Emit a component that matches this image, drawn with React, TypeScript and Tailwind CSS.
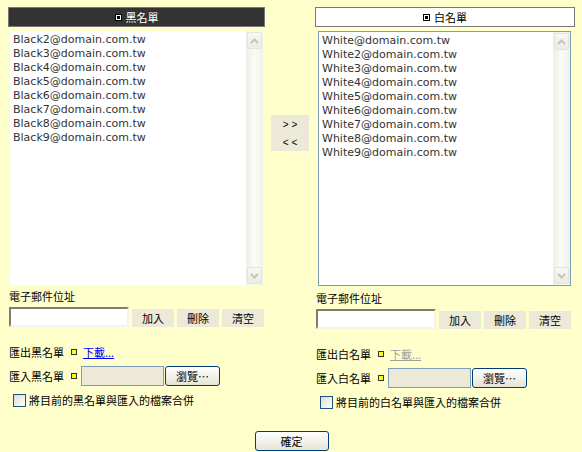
import React from "react";

const cjk = { fontFamily: '"Noto Sans CJK TC", "Noto Sans CJK SC", sans-serif' };

function Chevron({ up }: { up: boolean }) {
  return (
    <svg width="9" height="6" viewBox="0 0 9 6">
      <polyline
        points={up ? "1,5 4.5,1.5 8,5" : "1,1 4.5,4.5 8,1"}
        fill="none"
        stroke="#c5c4bb"
        strokeWidth="2"
      />
    </svg>
  );
}

function ScrollBtn({ up }: { up: boolean }) {
  return (
    <div className="flex h-[17px] w-[15px] items-center justify-center rounded-[2px] border border-[#e6e4da] bg-gradient-to-b from-[#f8f8f4] to-[#ecebe4]">
      <Chevron up={up} />
    </div>
  );
}

function Scrollbar() {
  return (
    <div className="flex h-full w-[17px] shrink-0 flex-col items-center bg-gradient-to-r from-[#eeeee8] via-[#fbfbf8] to-[#f1f1ec] py-[1px]">
      <ScrollBtn up />
      <div className="flex-1" />
      <ScrollBtn up={false} />
    </div>
  );
}

function HeaderIcon() {
  return (
    <span className="flex h-[7px] w-[7px] items-center justify-center border border-black bg-white">
      <span className="h-[3px] w-[3px] bg-black" />
    </span>
  );
}

function YellowSq({ mr }: { mr: string }) {
  return <span className={`ml-[7px] inline-block h-[6px] w-[6px] shrink-0 border border-[#333] bg-[#ffff00] ${mr}`} />;
}

function GrayBtn({ label }: { label: string }) {
  return (
    <div className="flex h-[18px] w-[42px] items-center justify-center bg-[#ece9d8] text-[11px] leading-[14px] text-black" style={cjk}>
      {label}
    </div>
  );
}

function ListItems({ items }: { items: string[] }) {
  return (
    <div className="flex-1 pl-[3px] pt-[2px] text-[11px] leading-[14px] text-[#333]" style={{ fontFamily: '"DejaVu Sans", Verdana, sans-serif' }}>
      {items.map((t) => (
        <div key={t}>{t}</div>
      ))}
    </div>
  );
}

function Lower({
  exportLabel,
  importLabel,
  mergeLabel,
  linkColor,
  labelMt,
}: {
  exportLabel: string;
  importLabel: string;
  mergeLabel: string;
  linkColor: string;
  labelMt: string;
}) {
  return (
    <div className="pl-[1px] text-[11px] leading-[14px] text-black" style={cjk}>
      <div className={labelMt}>電子郵件位址</div>
      <div className="mt-[4px] flex items-end gap-[3px]">
        <div className="h-[20px] w-[120px] border-2 border-t-[#7d7d74] border-l-[#7d7d74] border-r-[#f4f4ea] border-b-[#f4f4ea] bg-white" />
        <GrayBtn label="加入" />
        <GrayBtn label="刪除" />
        <GrayBtn label="清空" />
      </div>
      <div className="mt-[15px] flex h-[20px] items-center">
        <span className="w-[55px]">{exportLabel}</span>
        <YellowSq mr="mr-[6px]" />
        <span className={`underline ${linkColor}`}>下載...</span>
      </div>
      <div className="mt-[4px] flex h-[20px] items-center">
        <span className="w-[55px]">{importLabel}</span>
        <YellowSq mr="mr-[4px]" />
        <div className="h-[20px] w-[83px] border border-[#7f9db9] bg-[#ece9d8]" />
        <div className="ml-[1px] flex h-[20px] w-[55px] items-center justify-center rounded-[3px] border border-[#003c74] bg-gradient-to-b from-white to-[#e6e3d6]">
          瀏覽⋯
        </div>
      </div>
      <div className="mt-[7px] flex h-[14px] items-center pl-[4px]">
        <span className="h-[13px] w-[13px] shrink-0 border border-[#1c5180] bg-gradient-to-br from-[#dcdcd6] to-white" />
        <span className="ml-[3px]">{mergeLabel}</span>
      </div>
    </div>
  );
}

export default function App() {
  const black = [2, 3, 4, 5, 6, 7, 8, 9].map((n) => `Black${n}@domain.com.tw`);
  const white = ["White@domain.com.tw", ...[2, 3, 4, 5, 6, 7, 8, 9].map((n) => `White${n}@domain.com.tw`)];
  return (
    <div className="h-[452px] w-[582px] overflow-hidden bg-[#ffffcc] pt-[7px]">
      <div className="flex h-[424px] pl-[8px]">
        {/* left */}
        <div className="w-[257px] shrink-0">
          <div className="flex h-[20px] items-center justify-center gap-[4px] border border-[#777] bg-[#333] text-[11px] text-white" style={cjk}>
            <HeaderIcon />
            <span>黑名單</span>
          </div>
          <div className="ml-[2px] mt-[4px] flex h-[254px] w-[253px] bg-white">
            <ListItems items={black} />
            <Scrollbar />
          </div>
          <Lower
            exportLabel="匯出黑名單"
            importLabel="匯入黑名單"
            mergeLabel="將目前的黑名單與匯入的檔案合併"
            linkColor="text-[#0000ff]"
            labelMt="mt-[4px]"
          />
        </div>
        {/* middle */}
        <div className="w-[50px] shrink-0">
          <div className="ml-[6px] mt-[108px] flex h-[36px] w-[38px] flex-col bg-[#ece9d8] text-[10px] text-black" style={{ fontFamily: '"Liberation Sans", Arial, sans-serif' }}>
            <div className="flex h-[18px] items-center justify-center">&gt; &gt;</div>
            <div className="flex h-[18px] items-center justify-center">&lt; &lt;</div>
          </div>
        </div>
        {/* right */}
        <div className="w-[260px] shrink-0">
          <div className="flex h-[20px] items-center justify-center gap-[4px] border border-[#777] bg-white text-[11px] text-black" style={cjk}>
            <HeaderIcon />
            <span>白名單</span>
          </div>
          <div className="ml-[3px] mt-[4px] flex h-[255px] w-[253px] border border-[#7f9db9] bg-white">
            <ListItems items={white} />
            <Scrollbar />
          </div>
          <Lower
            exportLabel="匯出白名單"
            importLabel="匯入白名單"
            mergeLabel="將目前的白名單與匯入的檔案合併"
            linkColor="text-[#a0a0a0]"
            labelMt="mt-[5px]"
          />
        </div>
      </div>
      <div className="flex justify-center">
        <div className="ml-[1px] flex h-[20px] w-[74px] items-center justify-center rounded-[3px] border border-[#003c74] bg-gradient-to-b from-white to-[#e6e3d6] text-[11px] text-black" style={cjk}>
          確定
        </div>
      </div>
    </div>
  );
}
